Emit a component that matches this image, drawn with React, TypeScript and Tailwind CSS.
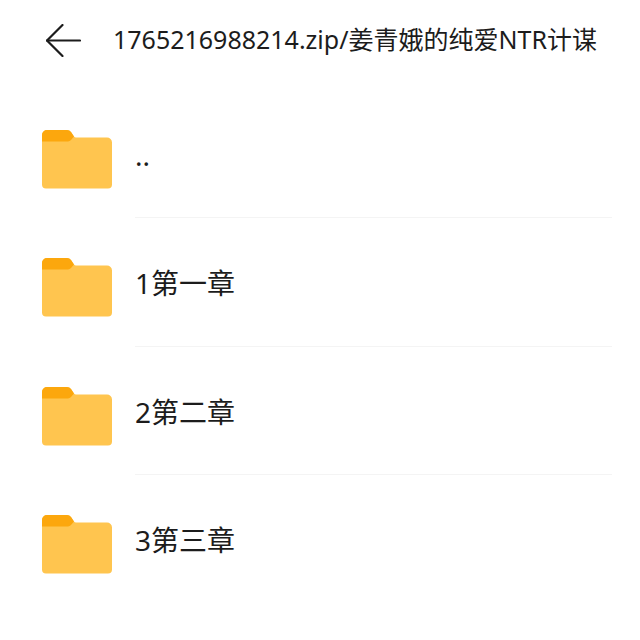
import React from 'react';

const rows = ['..', '1第一章', '2第二章', '3第三章'];

const FolderIcon: React.FC = () => (
  <svg width="70" height="59" viewBox="0 0 70 59" className="shrink-0 mt-[11px]">
    <path d="M0 5a5 5 0 0 1 5-5h20a5 5 0 0 1 4 2l3 4.500a3 3 0 0 0 2 1h31a5 5 0 0 1 5 5v42a4 4 0 0 1-4 4H4a4 4 0 0 1-4-4z" fill="#ffc54f" />
    <path d="M0 5a5 5 0 0 1 5-5h20a5 5 0 0 1 4 2l3 4.500 -3 3.500a5 5 0 0 1-3 1.500H0z" fill="#fca70d" />
  </svg>
);

export default function App() {
  return (
    <div className="w-[640px] h-[640px] bg-white overflow-hidden font-['Noto_Sans','Noto_Sans_CJK_SC',sans-serif] text-[#1c1c1c]">
      <header className="flex items-center h-[80px] pl-[46px] mb-[9.5px]">
        <svg width="35" height="33" viewBox="0 0 35 33" fill="none" stroke="#1c1c1c" strokeWidth="2.200" strokeLinecap="round" strokeLinejoin="round" className="shrink-0">
          <path d="M34 16.500H1" />
          <path d="M16.500 1 1 16.500 16.500 32" />
        </svg>
        <h1 className="ml-[32px] mb-[1px] text-[25px] leading-none font-normal whitespace-nowrap">1765216988214.zip/姜青娥的纯爱NTR计谋</h1>
      </header>
      <ul className="pl-[42px] pr-[28px]">
        {rows.map((name, i) => (
          <li key={name} className="flex items-center h-[128.5px]">
            <FolderIcon />
            <div className={`ml-[23px] flex-1 h-full flex items-center border-b ${i < 3 ? 'border-[#f4f4f4]' : 'border-transparent'}`}>
              <span className="text-[28px] leading-none mt-[3px]">{name}</span>
            </div>
          </li>
        ))}
      </ul>
    </div>
  );
}
